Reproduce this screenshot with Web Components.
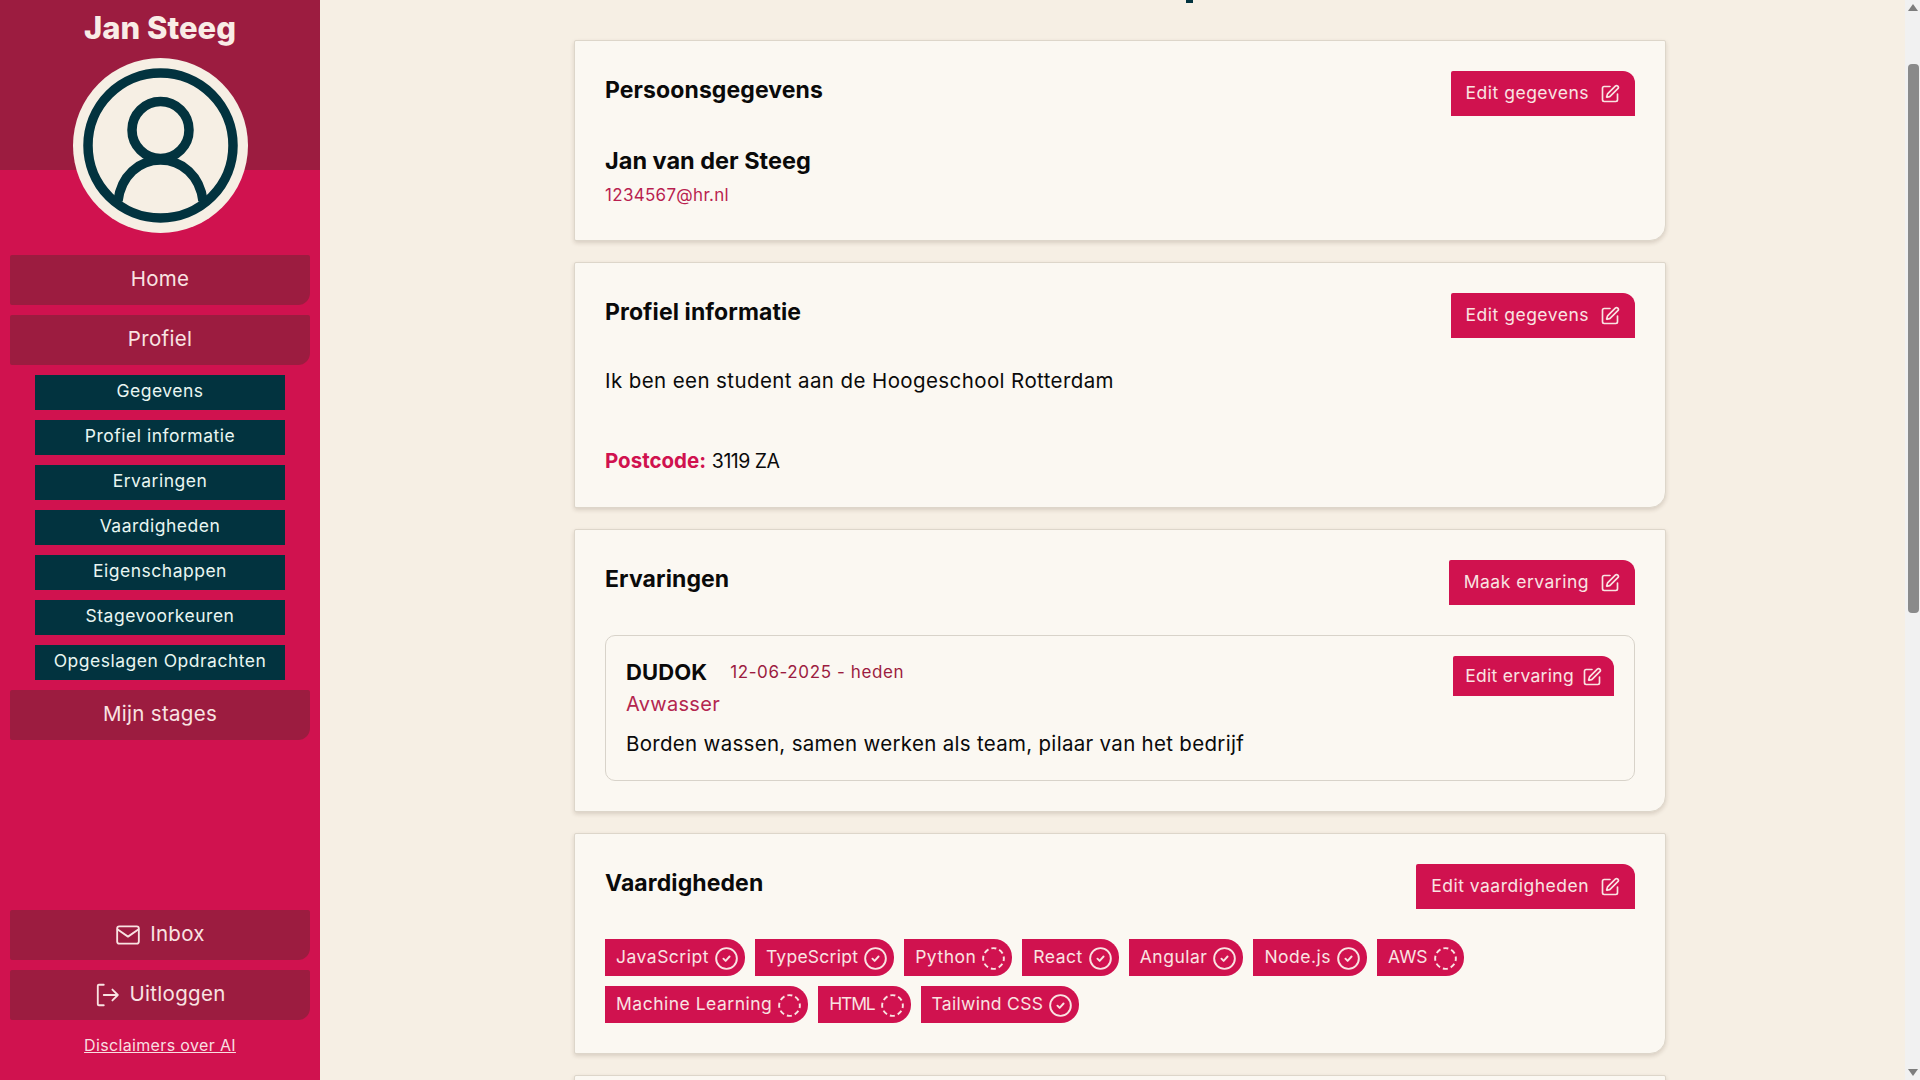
<!DOCTYPE html>
<html lang="nl">
<head>
<meta charset="utf-8">
<title>Profiel</title>
<style>
  html, body { margin: 0; height: 100%; overflow: hidden; }
  body { background: #f6efe4; color: #0a0a0a; font-family: Inter, "Noto Sans", sans-serif; }
  .page { display: flex; height: 100vh; }
</style>
</head>
<body>
<div class="page">
  <side-bar name="Jan Steeg">
    <nav-button>Home</nav-button>
    <nav-button>Profiel</nav-button>
    <sub-link>Gegevens</sub-link>
    <sub-link>Profiel informatie</sub-link>
    <sub-link>Ervaringen</sub-link>
    <sub-link>Vaardigheden</sub-link>
    <sub-link>Eigenschappen</sub-link>
    <sub-link>Stagevoorkeuren</sub-link>
    <sub-link>Opgeslagen Opdrachten</sub-link>
    <nav-button>Mijn stages</nav-button>
    <nav-button slot="bottom" icon="mail">Inbox</nav-button>
    <nav-button slot="bottom" icon="logout">Uitloggen</nav-button>
  </side-bar>
  <main-area>
    <info-card heading="Persoonsgegevens" action="Edit gegevens">
      <person-info name="Jan van der Steeg" email="1234567@hr.nl"></person-info>
    </info-card>
    <info-card heading="Profiel informatie" action="Edit gegevens">
      <profile-text postcode="3119 ZA">Ik ben een student aan de Hoogeschool Rotterdam</profile-text>
    </info-card>
    <info-card heading="Ervaringen" action="Maak ervaring">
      <experience-item company="DUDOK" dates="12-06-2025 - heden" role="Avwasser">Borden wassen, samen werken als team, pilaar van het bedrijf</experience-item>
    </info-card>
    <info-card heading="Vaardigheden" action="Edit vaardigheden">
      <skill-list>
        <skill-tag done>JavaScript</skill-tag>
        <skill-tag done style="--tag-ls: 0.25px">TypeScript</skill-tag>
        <skill-tag>Python</skill-tag>
        <skill-tag done>React</skill-tag>
        <skill-tag done>Angular</skill-tag>
        <skill-tag done>Node.js</skill-tag>
        <skill-tag style="--tag-ls: 0">AWS</skill-tag>
        <skill-tag>Machine Learning</skill-tag>
        <skill-tag style="--tag-ls: -1.2px">HTML</skill-tag>
        <skill-tag done style="--tag-ls: 0.3px">Tailwind CSS</skill-tag>
      </skill-list>
    </info-card>
    <info-card></info-card>
  </main-area>
  <page-scrollbar></page-scrollbar>
</div>

<script>
  const ICONS = {
    mail: '<svg viewBox="0 0 24 24" width="26" height="26" fill="none" stroke="currentColor" stroke-width="1.7" stroke-linecap="round" stroke-linejoin="round"><rect x="2" y="4" width="20" height="16" rx="2"/><path d="M2.5 7l9.5 6.5L21.500 7"/></svg>',
    logout: '<svg viewBox="0 0 24 24" width="26" height="26" fill="none" stroke="currentColor" stroke-width="1.7" stroke-linecap="round" stroke-linejoin="round"><path d="M9 2.500H4.500a1 1 0 0 0-1 1v17a1 1 0 0 0 1 1H9"/><path d="M9 12h13M17 7l5 5-5 5"/></svg>',
    edit: '<svg viewBox="0 0 24 24" width="20" height="20" fill="none" stroke="currentColor" stroke-width="2" stroke-linecap="round" stroke-linejoin="round"><path d="M12 3H5a2 2 0 0 0-2 2v14a2 2 0 0 0 2 2h14a2 2 0 0 0 2-2v-7"/><path d="M18.375 2.625a1 1 0 0 1 3 3l-9.013 9.014a2 2 0 0 1-.853.505l-2.873.84a.5.5 0 0 1-.62-.62l.84-2.873a2 2 0 0 1 .506-.852z"/></svg>',
    check: '<svg viewBox="0 0 24 24" width="23" height="23" fill="none" stroke="currentColor" stroke-width="2" stroke-linecap="round" stroke-linejoin="round"><circle cx="12" cy="12" r="10.800"/><path d="M8.800 12.200l2.300 2.300 4.100-4.600"/></svg>',
    pending: '<svg viewBox="0 0 24 24" width="23" height="23" fill="none" stroke="currentColor" stroke-width="2" stroke-linecap="butt"><circle cx="12" cy="12" r="10.800" stroke-dasharray="5.300 3.180" stroke-dashoffset="2.600"/></svg>'
  };

  class SideBar extends HTMLElement {
    connectedCallback() {
      this.attachShadow({ mode: 'open' });
      this.shadowRoot.innerHTML = `
        <style>
          :host {
            display: flex;
            flex-direction: column;
            flex: 0 0 320px;
            height: 100vh;
            background: #d0124f;
            color: #f9e9e4;
          }
          .band {
            background: #9c1c40;
            height: 170px;
            text-align: center;
          }
          h1 {
            margin: 0;
            padding-top: 7px;
            font-size: 31px;
            line-height: 42px;
            font-weight: 800;
            color: #f9ece6;
          }
          .avatar {
            display: block;
            width: 175px;
            height: 175px;
            margin: -112px auto 0;
            position: relative;
          }
          .menu {
            display: flex;
            flex-direction: column;
            gap: 10px;
            padding: 22px 10px 0;
          }
          .bottom {
            display: flex;
            flex-direction: column;
            gap: 10px;
            margin-top: auto;
            padding: 0 10px;
          }
          a {
            display: block;
            margin: 13px 0 23px;
            text-align: center;
            font-size: 16px;
            letter-spacing: 0.35px;
            line-height: 24px;
            color: #f9dfe0;
            text-decoration: underline;
          }
        </style>
        <div class="band"><h1>${this.getAttribute('name')}</h1></div>
        <svg class="avatar" viewBox="0 0 175 175">
          <circle cx="87.500" cy="87.500" r="87.500" fill="#f6efe4"/>
          <circle cx="87.500" cy="87.500" r="72.500" fill="none" stroke="#02333f" stroke-width="9.500"/>
          <circle cx="87.500" cy="72" r="28.500" fill="none" stroke="#02333f" stroke-width="9.500"/>
          <path d="M45 143C48 118 66 102 87.500 102C109 102 127 118 130 143" fill="none" stroke="#02333f" stroke-width="9.500"/>
        </svg>
        <div class="menu"><slot></slot></div>
        <div class="bottom"><slot name="bottom"></slot></div>
        <a href="#">Disclaimers over AI</a>
      `;
    }
  }
  customElements.define('side-bar', SideBar);

  class NavButton extends HTMLElement {
    connectedCallback() {
      const icon = ICONS[this.getAttribute('icon')] || '';
      this.attachShadow({ mode: 'open' });
      this.shadowRoot.innerHTML = `
        <style>
          :host {
            display: flex;
            align-items: center;
            justify-content: center;
            gap: 9px;
            height: 50px;
            box-sizing: border-box;
            padding-bottom: 4px;
            background: #9c1c40;
            border-radius: 2px 2px 12px 2px;
            color: #f9e3e2;
            font-size: 20.5px;
            letter-spacing: 0.3px;
          }
          svg { display: block; margin-top: 3px; }
        </style>
        ${icon}<slot></slot>
      `;
    }
  }
  customElements.define('nav-button', NavButton);

  class SubLink extends HTMLElement {
    connectedCallback() {
      this.attachShadow({ mode: 'open' });
      this.shadowRoot.innerHTML = `
        <style>
          :host {
            display: flex;
            align-items: center;
            justify-content: center;
            height: 35px;
            box-sizing: border-box;
            padding-bottom: 5px;
            margin: 0 25px;
            background: #02333f;
            color: #e9f6f2;
            font-size: 17.5px;
            letter-spacing: 0.5px;
            white-space: nowrap;
          }
        </style>
        <slot></slot>
      `;
    }
  }
  customElements.define('sub-link', SubLink);

  class MainArea extends HTMLElement {
    connectedCallback() {
      this.attachShadow({ mode: 'open' });
      this.shadowRoot.innerHTML = `
        <style>
          :host {
            display: flex;
            flex-direction: column;
            gap: 21px;
            flex: 1;
            min-width: 0;
            height: 100vh;
            overflow: hidden;
            padding: 40px 239px 0 254px;
            box-sizing: border-box;
            position: relative;
          }
          .cut { position: absolute; left: 866px; top: 0; width: 7px; height: 3px; background: #02333f; }
        </style>
        <div class="cut"></div>
        <slot></slot>
      `;
    }
  }
  customElements.define('main-area', MainArea);

  class InfoCard extends HTMLElement {
    connectedCallback() {
      const action = this.getAttribute('action');
      const heading = this.getAttribute('heading');
      this.attachShadow({ mode: 'open' });
      this.shadowRoot.innerHTML = `
        <style>
          :host {
            display: block;
            flex: none;
            box-sizing: border-box;
            padding: 30px;
            background: #fbf8f2;
            border: 1px solid #ddd6ca;
            border-radius: 2px 2px 16px 2px;
            box-shadow: 0 2px 4px rgba(60, 40, 20, 0.16);
          }
          :host(:empty) { height: 120px; }
          .head {
            display: flex;
            justify-content: space-between;
            align-items: flex-start;
            margin-bottom: 30px;
          }
          h2 {
            margin: 0;
            padding-top: 3px;
            font-size: 23px;
            line-height: 33px;
            font-weight: 700;
            letter-spacing: 0.1px;
          }
        </style>
        ${heading ? `<div class="head"><h2>${heading}</h2><edit-button>${action}</edit-button></div>` : ''}
        <slot></slot>
      `;
    }
  }
  customElements.define('info-card', InfoCard);

  class EditButton extends HTMLElement {
    connectedCallback() {
      this.attachShadow({ mode: 'open' });
      this.shadowRoot.innerHTML = `
        <style>
          :host {
            display: inline-flex;
            align-items: center;
            gap: var(--btn-gap, 11px);
            flex: none;
            box-sizing: border-box;
            height: var(--btn-height, 45px);
            padding: 0 var(--btn-pad, 15px);
            background: #d0124f;
            border-radius: 2px 12px 0 0;
            color: #f9e3e2;
            font-size: 17.5px;
            letter-spacing: var(--btn-ls, 0.5px);
            white-space: nowrap;
          }
          span { margin-top: -2px; }
          svg { display: block; margin-top: 1px; }
        </style>
        <span><slot></slot></span>${ICONS.edit}
      `;
    }
  }
  customElements.define('edit-button', EditButton);

  class PersonInfo extends HTMLElement {
    connectedCallback() {
      this.attachShadow({ mode: 'open' });
      this.shadowRoot.innerHTML = `
        <style>
          :host { display: block; margin-top: -2px; }
          h3 { margin: 0; font-size: 23.5px; line-height: 33px; font-weight: 700; }
          p { margin: 6px 0 3px; font-size: 17px; line-height: 24px; letter-spacing: 0.3px; color: #b91f50; }
        </style>
        <h3>${this.getAttribute('name')}</h3>
        <p>${this.getAttribute('email')}</p>
      `;
    }
  }
  customElements.define('person-info', PersonInfo);

  class ProfileText extends HTMLElement {
    connectedCallback() {
      this.attachShadow({ mode: 'open' });
      this.shadowRoot.innerHTML = `
        <style>
          :host { display: block; margin-top: -1px; padding-bottom: 2px; font-size: 20.5px; line-height: 28px; letter-spacing: 0.4px; }
          p { margin: 0; }
          .post { margin-top: 52px; letter-spacing: 0; }
          b { color: #d0124f; font-weight: 700; }
          span { font-size: 19.5px; letter-spacing: -0.5px; }
        </style>
        <p><slot></slot></p>
        <p class="post"><b>Postcode:</b> <span>${this.getAttribute('postcode')}</span></p>
      `;
    }
  }
  customElements.define('profile-text', ProfileText);

  class ExperienceItem extends HTMLElement {
    connectedCallback() {
      this.attachShadow({ mode: 'open' });
      this.shadowRoot.innerHTML = `
        <style>
          :host {
            display: flex;
            justify-content: space-between;
            align-items: flex-start;
            padding: 20px;
            background: #fbf8f2;
            border: 1px solid #d8d3ca;
            border-radius: 10px;
            --btn-height: 40px;
            --btn-pad: 12px;
            --btn-gap: 8px;
            --btn-ls: 0.3px;
          }
          .line { display: flex; align-items: center; gap: 23px; height: 32px; }
          h3 { margin: 0; font-size: 22px; font-weight: 700; letter-spacing: 0.1px; }
          .dates { font-size: 17px; letter-spacing: 0.6px; color: #9c1c40; }
          .role { margin: 1px 0 -1px; font-size: 20px; line-height: 30px; letter-spacing: 0.3px; color: #b4264f; }
          .desc { margin: 12px 0 2px; font-size: 20.5px; line-height: 28px; letter-spacing: 0.3px; }
        </style>
        <div>
          <div class="line"><h3>${this.getAttribute('company')}</h3><span class="dates">${this.getAttribute('dates')}</span></div>
          <p class="role">${this.getAttribute('role')}</p>
          <p class="desc"><slot></slot></p>
        </div>
        <edit-button>Edit ervaring</edit-button>
      `;
    }
  }
  customElements.define('experience-item', ExperienceItem);

  class SkillList extends HTMLElement {
    connectedCallback() {
      this.attachShadow({ mode: 'open' });
      this.shadowRoot.innerHTML = `
        <style>
          :host { display: flex; flex-wrap: wrap; gap: 10px; }
        </style>
        <slot></slot>
      `;
    }
  }
  customElements.define('skill-list', SkillList);

  class SkillTag extends HTMLElement {
    connectedCallback() {
      const icon = this.hasAttribute('done') ? ICONS.check : ICONS.pending;
      this.attachShadow({ mode: 'open' });
      this.shadowRoot.innerHTML = `
        <style>
          :host {
            display: inline-flex;
            align-items: center;
            gap: 6px;
            height: 37px;
            padding: 0 7px 0 11px;
            background: #d0124f;
            border-radius: 0 18px 18px 0;
            color: #f9e3e2;
            font-size: 17.5px;
            letter-spacing: var(--tag-ls, 0.5px);
            white-space: nowrap;
          }
          span { margin-top: -3px; }
          svg { display: block; margin-top: 1px; }
        </style>
        <span><slot></slot></span>${icon}
      `;
    }
  }
  customElements.define('skill-tag', SkillTag);

  class PageScrollbar extends HTMLElement {
    connectedCallback() {
      this.attachShadow({ mode: 'open' });
      this.shadowRoot.innerHTML = `
        <style>
          :host {
            display: flex;
            flex-direction: column;
            justify-content: space-between;
            flex: 0 0 15px;
            height: 100vh;
            background: #f1f1f1;
            position: relative;
          }
          .up, .down { width: 0; height: 0; margin: 4px auto; border: 5px solid transparent; }
          .up { border-top: 0; border-bottom: 7px solid #7d7d7d; }
          .down { border-bottom: 0; border-top: 7px solid #7d7d7d; }
          .thumb {
            position: absolute;
            left: 3px;
            right: 1px;
            top: 64px;
            height: 549px;
            background: #8a8a8a;
            border-radius: 4px;
          }
        </style>
        <div class="up"></div>
        <div class="thumb"></div>
        <div class="down"></div>
      `;
    }
  }
  customElements.define('page-scrollbar', PageScrollbar);
</script>
</body>
</html>
